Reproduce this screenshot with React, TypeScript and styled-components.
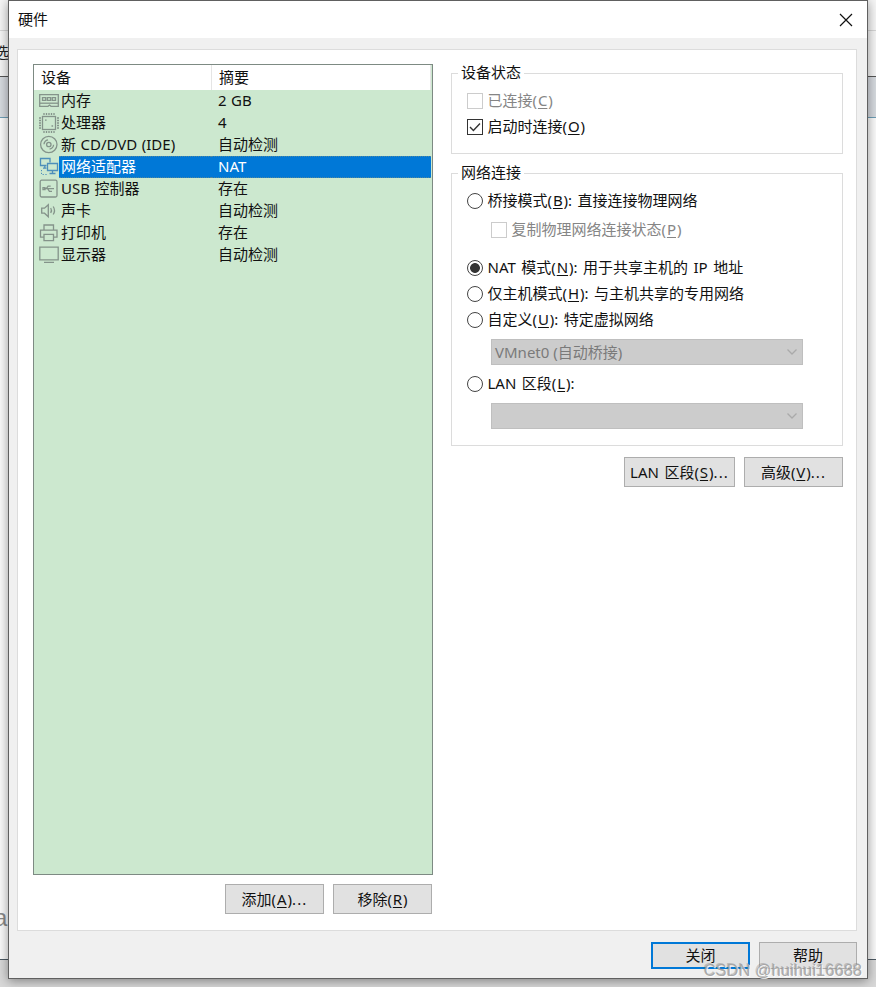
import React from 'react';
import styled, { createGlobalStyle } from 'styled-components';

const Global = createGlobalStyle`
  *, *::before, *::after { box-sizing: border-box; }
  body { margin: 0; overflow: hidden; }
  #root { font: 15px/22px "Noto Sans", "Noto Sans CJK SC", sans-serif; color: #111; }
`;

const Screen = styled.div`
  position: relative;
  width: 876px;
  height: 987px;
  overflow: hidden;
`;

/* Main application window behind the dialog */
const Backdrop = styled.div`
  display: flex;
  flex-direction: column;
  height: 100%;
`;
const Band = styled.div<{ $h: number; $bg: string; $line: string }>`
  height: ${p => p.$h}px;
  background: ${p => p.$bg};
  border-bottom: 1px solid ${p => p.$line};
  overflow: hidden;
`;
const BackMenuText = styled.div`
  margin: 10px 0 0 -6px;
  font-size: 15px;
  color: #222;
`;
const BackLargeText = styled.div`
  margin: 784px 0 0 -6px;
  font: 24px/32px "Liberation Sans", sans-serif;
  color: #8a8a8a;
`;

const Dialog = styled.section`
  position: absolute;
  left: 8px;
  top: 0;
  width: 860px;
  height: 979px;
  display: flex;
  flex-direction: column;
  background: #f0f0f0;
  border: 1px solid #606060;
  box-shadow: 0 2px 10px rgba(0, 0, 0, 0.4);
`;
const TitleBar = styled.header`
  display: flex;
  justify-content: space-between;
  align-items: center;
  flex: none;
  height: 37px;
  padding: 0 14px 0 9px;
  background: #fff;
`;
const Title = styled.h1`
  margin: 0 0 2px;
  font-size: 15px;
  font-weight: 400;
`;
const Content = styled.main`
  display: flex;
  gap: 18px;
  flex: none;
  height: 882px;
  margin: 11px 10px 0 8px;
  padding: 15px 13px 0 15px;
  background: #fff;
  border: 1px solid #dcdcdc;
`;
const DevicePane = styled.div`
  flex: none;
  width: 400px;
`;
const DeviceList = styled.div`
  height: 811px;
  margin-top: -1px;
  background: #cce8cf;
  border: 1px solid #7d8a83;
`;
const ListHeader = styled.div`
  display: flex;
  height: 25px;
  line-height: 24px;
  margin-right: 1px;
  background: #fff;
`;
const HeaderCell = styled.div<{ $w?: number }>`
  width: ${p => (p.$w ? `${p.$w}px` : 'auto')};
  flex: ${p => (p.$w ? 'none' : '1')};
  padding-left: 7px;
  border-right: 1px solid #e5e5e5;
`;
const DeviceRow = styled.div<{ $selected?: boolean }>`
  display: grid;
  grid-template-columns: 25px 152px 1fr;
  height: 22px;
  margin-right: 1px;
  color: ${p => (p.$selected ? '#fff' : '#111')};
`;
const IconCell = styled.span`
  display: flex;
  align-items: center;
  padding-left: 5px;
`;
const Cell = styled.span<{ $selected?: boolean; $indent: number }>`
  padding-left: ${p => p.$indent}px;
  background: ${p => (p.$selected ? '#0078d7' : 'transparent')};
  border: 1px dotted ${p => (p.$selected ? '#4e86a0' : 'transparent')};
  border-width: 1px 0;
  line-height: 19px;
  word-spacing: 0.6px;
  white-space: nowrap;
`;
const ButtonRow = styled.div<{ $top: number; $right?: number }>`
  display: flex;
  justify-content: flex-end;
  gap: 9px;
  margin-top: ${p => p.$top}px;
  margin-right: ${p => p.$right ?? 0}px;
`;
const Button = styled.button<{ $w?: number; $h?: number; $primary?: boolean }>`
  width: ${p => p.$w ?? 99}px;
  height: ${p => p.$h ?? 30}px;
  padding: 0 0 1px;
  font: inherit;
  color: #111;
  background: #e1e1e1;
  border: ${p => (p.$primary ? '2px solid #0078d7' : '1px solid #adadad')};
  white-space: nowrap;
`;
const Settings = styled.div`
  width: 392px;
`;
const Group = styled.fieldset<{ $h: number; $top: number }>`
  display: block;
  min-width: 0;
  height: ${p => p.$h}px;
  margin: ${p => p.$top}px 0 0;
  padding: 0 0 0 15px;
  border: 1px solid #dcdcdc;
`;
const Legend = styled.legend`
  height: 22px;
  line-height: 20px;
  margin-left: -9px;
  padding: 0 3px;
`;
const Option = styled.label<{ $gap?: number; $indent?: number; $disabled?: boolean }>`
  display: flex;
  align-items: center;
  gap: 4.5px;
  height: 26px;
  margin-top: ${p => p.$gap ?? 0}px;
  margin-left: ${p => p.$indent ?? 0}px;
  color: ${p => (p.$disabled ? '#858585' : '#111')};
  white-space: nowrap;
`;
const Check = styled.span<{ $disabled?: boolean }>`
  display: grid;
  place-items: center;
  width: 16px;
  height: 16px;
  border: 1px solid ${p => (p.$disabled ? '#ccc' : '#333')};
`;
const Radio = styled.span<{ $on?: boolean }>`
  width: 16px;
  height: 16px;
  border: 1px solid #444;
  border-radius: 50%;
  background: ${p => (p.$on ? 'radial-gradient(circle, #333 4.5px, #fff 5.3px)' : '#fff')};
`;
const Select = styled.div<{ $top: number }>`
  display: flex;
  align-items: center;
  justify-content: space-between;
  width: 312px;
  height: 26px;
  margin: ${p => p.$top}px 0 0 24px;
  padding: 0 4px 0 3px;
  color: #7a7a7a;
  background: #ccc;
  border: 1px solid #bfbfbf;
`;
const Label = styled.span`
  padding-bottom: 2px;
  word-spacing: 1.6px;
`;
const AccessKey = styled.u`
  margin: 0 0.9px;
  text-underline-offset: 1.5px;
`;
const Dots = styled.span`
  letter-spacing: 1.1px;
`;
const Watermark = styled.div`
  position: absolute;
  left: 704px;
  top: 961px;
  font: 16px/20px "Liberation Sans", sans-serif;
  letter-spacing: 0.3px;
  color: rgba(160, 160, 160, 0.9);
  text-shadow: 1px 1px 0 rgba(255, 255, 255, 0.8), -1px -1px 0 rgba(110, 110, 110, 0.35);
  white-space: nowrap;
`;

/* Renders "(X)" access keys with the letter underlined */
const Keyed = ({ text }: { text: string }) => {
  const m = text.match(/^(.*?\()([A-Z])(\)[^.]*)(\.*)$/);
  return (
    <Label>
      {m ? <>{m[1]}<AccessKey>{m[2]}</AccessKey>{m[3]}{m[4] && <Dots>{m[4]}</Dots>}</> : text}
    </Label>
  );
};

const Svg = ({ children, color = '#84938a' }: { children: React.ReactNode; color?: string }) => (
  <svg width="20" height="20" viewBox="0 0 20 20" fill="none" stroke={color} strokeWidth="1.3">{children}</svg>
);
const MemoryIcon = () => (
  <Svg>
    <path d="M.7 3.7h18.6v11.6H12l-1.5-1.2L9 15.3H.7z" />
    <path d="M1 12.2h18" />
    <path d="M3.5 6.7h3.2v2.6H3.5zM8.4 6.7h3.2v2.6H8.4zM13.3 6.7h3.2v2.6h-3.2z" />
  </Svg>
);
const CpuIcon = () => (
  <Svg>
    <rect x="3.5" y="3.5" width="13" height="13" />
    <path d="M5 0v2M7.5 0v2M10 0v2M12.5 0v2M15 0v2M5 18v2M7.5 18v2M10 18v2M12.5 18v2M15 18v2M0 5h2M0 7.5h2M0 10h2M0 12.5h2M0 15h2M18 5h2M18 7.5h2M18 10h2M18 12.5h2M18 15h2M6 7.2h1.6M12.5 13h1.6" />
  </Svg>
);
const DiscIcon = () => (
  <Svg>
    <circle cx="9.8" cy="9.5" r="8.2" />
    <circle cx="9.8" cy="9.5" r="2.2" />
    <path d="M5 9.2A5 5 0 0 1 9 4.8M14.6 9.8a5 5 0 0 1-4 4.4" />
  </Svg>
);
const NetworkIcon = () => (
  <Svg color="#4d8fba">
    <path d="M7.5 8.5H1.5v-7h9.5v4M4 11.2h3.5M5.8 8.5v2.7" />
    <path d="M8.5 6.5h10v7h-10zM13.5 13.5v2.7M10.5 16.5h6" />
    <path d="M2.5 13v4.5h6" strokeWidth="1" strokeDasharray="1.2 1.6" />
  </Svg>
);
const UsbIcon = () => (
  <Svg>
    <rect x="1.2" y="1.2" width="16.8" height="16.8" rx="1.5" />
    <path d="M5 9.7h10M7.3 9.7l1.8-2.6h2.6M8.6 9.7l1.8 2.6H13" />
    <path d="M4 8.7h2v2H4z" />
  </Svg>
);
const SoundIcon = () => (
  <Svg>
    <path d="M2.7 7.2h2.8L9.3 3.7v12l-3.8-3.5H2.7z" />
    <path d="M11.7 7q1.6 2.5 0 5M14.2 5.5q2.6 4 0 8" />
  </Svg>
);
const PrinterIcon = () => (
  <Svg>
    <path d="M5 7V2h9.5v5M5 14.2H1.5V7.2h16.5v7h-3.5M5 11.4h9.5v6.2H5z" />
  </Svg>
);
const DisplayIcon = () => (
  <Svg>
    <path d="M.8 2.2h18.4v12.6H.8zM5 17.4h10" />
  </Svg>
);
const CheckMark = () => (
  <svg width="14" height="14" viewBox="0 0 14 14" fill="none" stroke="#333" strokeWidth="1.4"><path d="M2 7l3.4 3.4 6.6-6.8" /></svg>
);
const Chevron = () => (
  <svg width="12" height="8" viewBox="0 0 12 8" fill="none" stroke="#aaa" strokeWidth="1.3"><path d="M1.5 1.5L6 6l4.5-4.5" /></svg>
);

const devices = [
  { icon: <MemoryIcon />, name: '内存', summary: '2 GB' },
  { icon: <CpuIcon />, name: '处理器', summary: '4' },
  { icon: <DiscIcon />, name: '新 CD/DVD (IDE)', summary: '自动检测' },
  { icon: <NetworkIcon />, name: '网络适配器', summary: 'NAT', selected: true },
  { icon: <UsbIcon />, name: 'USB 控制器', summary: '存在' },
  { icon: <SoundIcon />, name: '声卡', summary: '自动检测' },
  { icon: <PrinterIcon />, name: '打印机', summary: '存在' },
  { icon: <DisplayIcon />, name: '显示器', summary: '自动检测' },
];

export default function App() {
  return (
    <Screen>
      <Global />
      <Backdrop>
        <Band $h={31} $bg="#f5f5f5" $line="#d5d5d5" />
        <Band $h={46} $bg="#f5f5f5" $line="#555"><BackMenuText>选</BackMenuText></Band>
        <Band $h={41} $bg="#d6dadf" $line="#6d9db5" />
        <Band $h={842} $bg="#fafafa" $line="#4d5a63"><BackLargeText>ar</BackLargeText></Band>
        <Band $h={27} $bg="#d8d8d8" $line="#d8d8d8" />
      </Backdrop>
      <Dialog>
        <TitleBar>
          <Title>硬件</Title>
          <svg width="14" height="14" viewBox="0 0 14 14" stroke="#111" strokeWidth="1.2"><path d="M1 1l12 12M13 1L1 13" /></svg>
        </TitleBar>
        <Content>
          <DevicePane>
            <DeviceList>
              <ListHeader>
                <HeaderCell $w={178}>设备</HeaderCell>
                <HeaderCell>摘要</HeaderCell>
              </ListHeader>
              {devices.map(d => (
                <DeviceRow key={d.name} $selected={d.selected}>
                  <IconCell>{d.icon}</IconCell>
                  <Cell $selected={d.selected} $indent={2}>{d.name}</Cell>
                  <Cell $selected={d.selected} $indent={7}>{d.summary}</Cell>
                </DeviceRow>
              ))}
            </DeviceList>
            <ButtonRow $top={9} $right={1}>
              <Button><Keyed text="添加(A)..." /></Button>
              <Button><Keyed text="移除(R)" /></Button>
            </ButtonRow>
          </DevicePane>
          <Settings>
            <Group $h={92} $top={-3}>
              <Legend>设备状态</Legend>
              <Option $gap={4} $disabled><Check $disabled /><Keyed text="已连接(C)" /></Option>
              <Option><Check><CheckMark /></Check><Keyed text="启动时连接(O)" /></Option>
            </Group>
            <Group $h={284} $top={8}>
              <Legend>网络连接</Legend>
              <Option $gap={4}><Radio /><Keyed text="桥接模式(B): 直接连接物理网络" /></Option>
              <Option $gap={3} $indent={24} $disabled><Check $disabled /><Keyed text="复制物理网络连接状态(P)" /></Option>
              <Option $gap={12}><Radio $on /><Keyed text="NAT 模式(N): 用于共享主机的 IP 地址" /></Option>
              <Option><Radio /><Keyed text="仅主机模式(H): 与主机共享的专用网络" /></Option>
              <Option><Radio /><Keyed text="自定义(U): 特定虚拟网络" /></Option>
              <Select $top={6}><span>VMnet0 (自动桥接)</span><Chevron /></Select>
              <Option $gap={6}><Radio /><Keyed text="LAN 区段(L):" /></Option>
              <Select $top={6}><span /><Chevron /></Select>
            </Group>
            <ButtonRow $top={11}>
              <Button $w={111}><Keyed text="LAN 区段(S)..." /></Button>
              <Button><Keyed text="高级(V)..." /></Button>
            </ButtonRow>
          </Settings>
        </Content>
        <ButtonRow $top={11} $right={10}>
          <Button $w={99} $h={27} $primary>关闭</Button>
          <Button $w={98} $h={27}>帮助</Button>
        </ButtonRow>
      </Dialog>
      <Watermark>CSDN @huihui16688</Watermark>
    </Screen>
  );
}
